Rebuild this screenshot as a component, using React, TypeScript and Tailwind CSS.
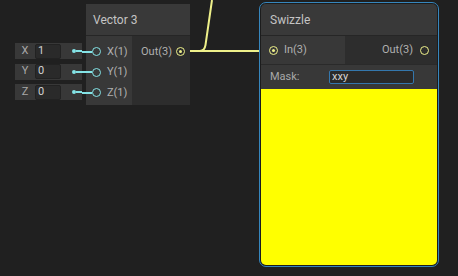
const PORT_YELLOW = '#eef08a'

const InlineField = ({ label, value }: { label: string; value: string }) => (
  <div className="flex items-center h-[16px] w-[67px] bg-[#383838]">
    <span className="w-[20px] text-center text-[11px] text-[#a8a8a8]">{label}</span>
    <div className="flex items-center h-[15px] w-[26px] pl-[2px] bg-[#2a2a2a] border border-[#222] rounded-[2px] text-[11px] text-[#d2d2d2]">
      {value}
    </div>
    <div className="ml-[11px] w-[4px] h-[4px] rounded-full bg-[#84e3e6]"></div>
    <div className="w-[6px] h-[2px] bg-[#84e3e6]"></div>
  </div>
)

const InPort = ({ label }: { label: string }) => (
  <div className="flex items-center h-[20.6px]">
    <div className="w-[10px] h-[2px] bg-[#84e3e6]"></div>
    <div className="w-[9px] h-[9px] rounded-full border-[1.5px] border-[#84e3e6]"></div>
    <span className="ml-[6px] text-[11px] text-[#b0b0b0]">{label}</span>
  </div>
)

export default function App() {
  return (
    <div
      className="relative w-[458px] h-[276px] overflow-hidden bg-[#202020]"
      style={{ fontFamily: 'Roboto, "Liberation Sans", sans-serif' }}
    >
      {/* wires */}
      <svg className="absolute inset-0" width={458} height={276}>
        <path
          d="M182 51 H 200 Q 204.5 51 205.5 45 L 212 0"
          fill="none"
          stroke={PORT_YELLOW}
          strokeWidth={2}
        />
        <path d="M182 51 H 268" fill="none" stroke={PORT_YELLOW} strokeWidth={2} />
      </svg>

      {/* inline value fields */}
      <div className="absolute left-[15px] top-[43px] flex flex-col gap-[4.6px]">
        <InlineField label="X" value="1" />
        <InlineField label="Y" value="0" />
        <InlineField label="Z" value="0" />
      </div>

      {/* Vector 3 node */}
      <div className="absolute left-[86px] top-[4px] w-[104px] h-[101px] flex flex-col bg-[#2d2d2d]">
        <div className="h-[32px] flex items-center pl-[7px] bg-[#393939] border-b border-[#262626] text-[12px] text-[#c4c4c4]">
          Vector 3
        </div>
        <div className="flex flex-1">
          <div className="w-[46px] bg-[#383838] pt-[5.5px]">
            <div className="-ml-[4px]">
              <InPort label="X(1)" />
              <InPort label="Y(1)" />
              <InPort label="Z(1)" />
            </div>
          </div>
          <div className="flex-1 pt-[5.5px]">
            <div className="flex items-center h-[20.6px] pl-[9px]">
              <span className="text-[11px] text-[#b0b0b0]">Out(3)</span>
              <div className="ml-[4px] w-[9px] h-[9px] rounded-full border-[1.5px] border-[#eef08a] flex items-center justify-center">
                <div className="w-[3px] h-[3px] rounded-full bg-[#eef08a]"></div>
              </div>
            </div>
          </div>
        </div>
      </div>

      {/* Swizzle node */}
      <div className="absolute left-[259px] top-[2px] w-[180px] h-[265px] rounded-[7px] border border-[#3686bd] p-[1px] bg-[#1c1c1c]">
        <div className="flex flex-col h-full rounded-[5px] overflow-hidden bg-[#2d2d2d]">
          <div className="h-[32px] flex items-center pl-[9px] bg-[#393939] border-b border-[#262626] text-[12px] text-[#c4c4c4]">
            Swizzle
          </div>
          <div className="flex h-[28px]">
            <div className="w-[84px] flex items-center pl-[8px] bg-[#383838]">
              <div className="w-[9px] h-[9px] rounded-full border-[1.5px] border-[#eef08a] flex items-center justify-center">
                <div className="w-[3px] h-[3px] rounded-full bg-[#eef08a]"></div>
              </div>
              <span className="ml-[6px] text-[11px] text-[#b0b0b0]">In(3)</span>
            </div>
            <div className="flex-1 flex items-center justify-end pr-[8px] bg-[#2d2d2d]">
              <span className="text-[11px] text-[#b0b0b0]">Out(3)</span>
              <div className="ml-[7px] w-[9px] h-[9px] rounded-full border-[1.5px] border-[#eef08a]"></div>
            </div>
          </div>
          <div className="h-[25px] flex items-center pl-[9px] bg-[#383838] border-t border-[#2a2a2a]">
            <span className="w-[59px] text-[11px] text-[#a8a8a8]">Mask:</span>
            <div className="flex items-center h-[14px] w-[85px] pl-[2px] bg-[#2a2a2a] border border-[#3477ad] rounded-[2px] text-[11px] text-[#d4d4d4]">
              xxy
            </div>
          </div>
          <div className="flex-1 bg-[#ffff00]"></div>
        </div>
      </div>
    </div>
  )
}
